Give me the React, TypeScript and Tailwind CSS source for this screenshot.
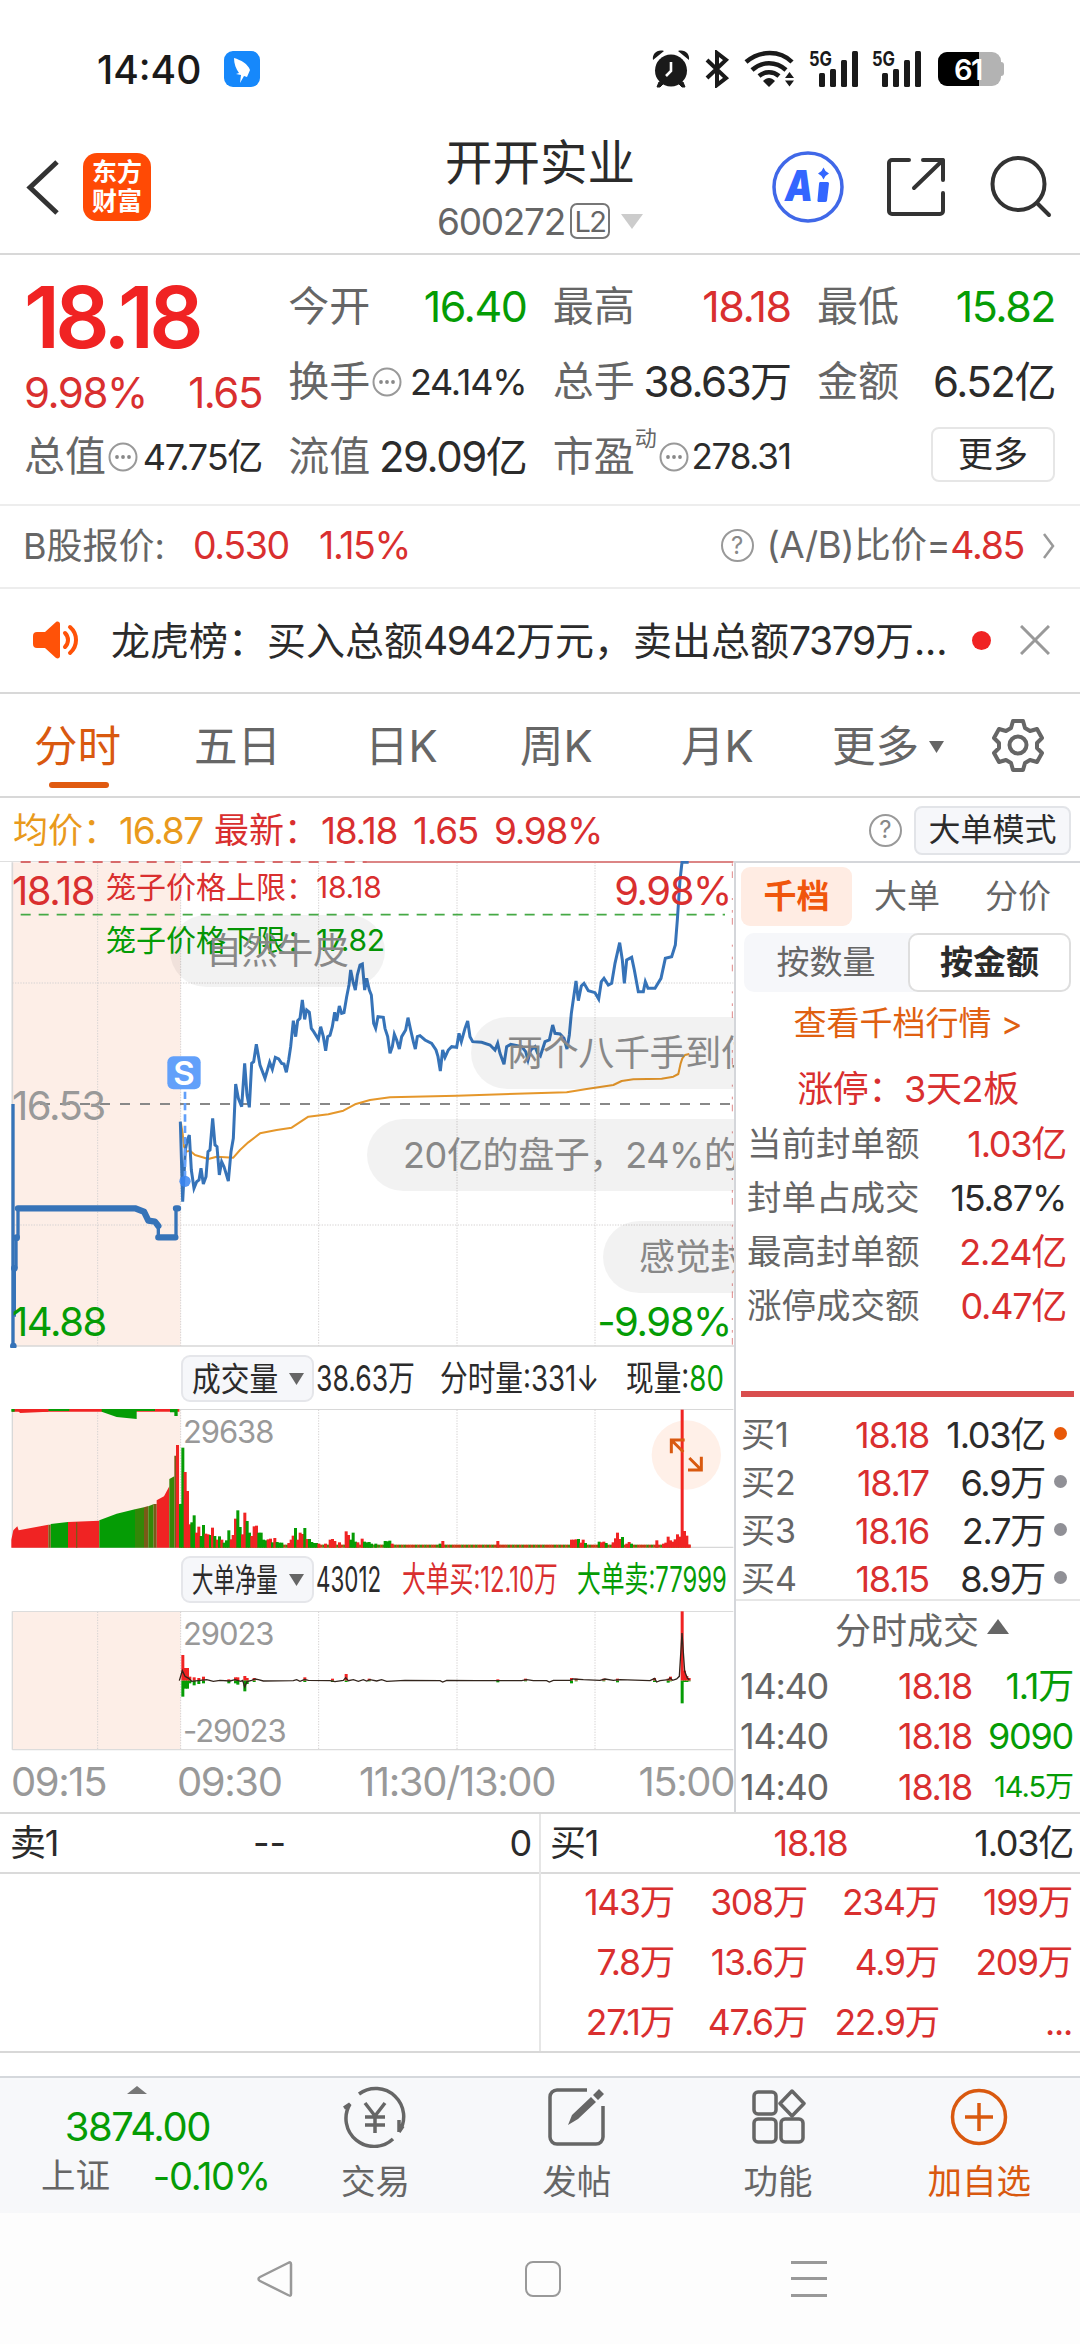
import { Fragment, type ReactNode } from 'react';

const RED = '#f02323';
const GREEN = '#059c05';

// price chart, drawn on a 3x grid
const priceLine =
  '541,815 548,1055 556,900 562,870 568,855 574,960 582,1015 590,995 597,990 603,955 610,1002 618,980 624,905 630,900 638,805 645,885 651,890 658,975 665,935 672,950 685,993 693,905 700,865 707,702 715,745 725,770 734,640 741,735 748,772 755,640 761,635 769,583 780,645 795,685 809,637 817,658 826,622 836,627 845,640 852,642 859,667 866,630 872,590 880,512 887,560 893,512 900,505 907,450 914,508 920,480 928,487 934,535 941,545 955,568 962,530 970,560 977,602 983,560 990,556 997,530 1004,487 1010,513 1018,468 1025,490 1032,488 1040,440 1047,405 1052,360 1059,395 1066,420 1072,375 1080,345 1087,342 1094,420 1100,385 1108,420 1114,435 1121,520 1127,535 1134,500 1150,502 1155,535 1163,560 1170,610 1177,590 1183,553 1190,570 1198,597 1205,560 1217,540 1224,503 1232,540 1240,575 1246,597 1252,560 1260,557 1275,570 1295,580 1308,600 1314,620 1321,663 1328,600 1335,622 1345,600 1355,590 1370,592 1377,550 1384,575 1395,535 1403,513 1410,560 1418,575 1445,577 1470,585 1485,600 1493,580 1500,610 1512,643 1520,590 1532,583 1565,590 1577,605 1584,630 1592,600 1605,590 1613,610 1621,618 1635,575 1648,570 1658,525 1665,550 1680,552 1692,565 1701,597 1708,555 1714,490 1728,393 1735,452 1744,408 1752,400 1765,422 1785,428 1796,447 1804,395 1812,385 1825,405 1835,400 1845,340 1859,278 1867,330 1873,400 1880,330 1895,322 1903,360 1915,425 1930,425 1936,395 1944,415 1965,415 1983,385 1996,325 2015,320 2026,285 2032,210 2040,90 2046,37 2066,37';
const avgLine =
  '543,820 548,850 552,890 560,905 570,902 585,915 625,927 650,920 700,923 720,900 745,877 780,850 830,840 875,833 925,800 985,793 1030,782 1065,763 1110,750 1170,742 1370,737 1700,727 1760,717 1840,705 1865,693 1900,688 1985,686 2020,680 2035,672 2042,640 2047,625 2055,615 2068,612';

// volume bars: [x, height, up?]
const bars: [number, number, number][] = [
  [541, 131, 0], [548, 300, 0], [555, 227, 1], [562, 170, 1], [569, 70, 1], [575, 76, 0], [582, 97, 0], [589, 45, 1],
  [596, 63, 1], [603, 35, 0], [610, 68, 0], [617, 42, 1], [624, 40, 1], [631, 38, 0], [637, 60, 1], [644, 35, 0],
  [651, 24, 1], [658, 34, 0], [665, 24, 1], [672, 15, 0], [679, 22, 0], [686, 52, 0], [693, 25, 1], [699, 38, 1],
  [706, 87, 1], [713, 112, 0], [720, 62, 0], [727, 40, 1], [734, 105, 1], [741, 80, 0], [748, 45, 0], [755, 35, 1],
  [762, 64, 1], [769, 66, 1], [776, 45, 0], [783, 45, 0], [790, 24, 0], [797, 22, 0], [804, 25, 1], [811, 27, 1],
  [817, 16, 0], [824, 29, 1], [831, 17, 0], [838, 15, 0], [845, 15, 0], [866, 14, 1], [873, 24, 1], [879, 36, 1],
  [886, 59, 0], [893, 24, 1], [900, 45, 1], [907, 41, 1], [914, 59, 0], [921, 26, 1], [928, 26, 0], [935, 17, 0],
  [942, 14, 0], [949, 14, 0], [956, 12, 1], [976, 12, 1], [990, 24, 1], [997, 26, 1], [1004, 20, 1], [1018, 16, 1],
  [1038, 49, 1], [1045, 38, 1], [1052, 24, 0], [1059, 45, 0], [1066, 18, 0], [1073, 16, 1], [1086, 27, 1], [1093, 18, 0],
  [1100, 16, 0], [1107, 17, 0], [1114, 12, 0], [1127, 12, 0], [1155, 20, 0], [1162, 19, 0], [1169, 21, 0], [1176, 12, 1],
  [1320, 12, 0], [1328, 20, 1], [1493, 20, 1], [1714, 24, 1], [1721, 24, 1], [1728, 25, 1], [1735, 26, 0], [1742, 15, 1],
  [1749, 24, 1], [1756, 14, 0], [1797, 18, 0], [1804, 16, 1], [1811, 18, 1], [1818, 14, 0], [1839, 16, 1], [1846, 28, 1],
  [1852, 45, 1], [1859, 26, 1], [1867, 32, 0], [1880, 12, 1], [1887, 17, 1], [1894, 12, 0], [1970, 22, 1], [1990, 12, 1],
  [1997, 15, 1], [2004, 33, 1], [2011, 22, 1], [2018, 18, 1], [2025, 25, 1], [2032, 40, 1], [2039, 33, 1], [2046, 414, 1],
  [2053, 50, 1], [2060, 36, 1], [2067, 9, 1],
];

// big-order net bars: [x, buy, sell]
const netBars: [number, number, number][] = [
  [548, 77, 48], [555, 38, 24], [562, 38, 24], [569, 12, 8], [582, 10, 14], [596, 8, 10], [610, 12, 8], [686, 4, 8],
  [706, 10, 8], [713, 10, 12], [734, 14, 32], [741, 8, 10], [762, 8, 4], [914, 10, 4], [997, 6, 4], [1038, 20, 4],
  [1107, 6, 2], [1493, 4, 5], [1576, 6, 2], [1714, 8, 8], [1728, 6, 2], [1811, 6, 2], [1852, 6, 5], [1963, 8, 4],
  [2004, 6, 6], [2011, 12, 2], [2046, 208, 68], [2053, 30, 4], [2060, 14, 4], [2067, 8, 2],
];

const comments = [
  { text: '自然牛皮', cls: 'left-[170px] top-[54px] w-[215px]' },
  { text: '两个八千手到位了', cls: 'left-[471px] top-[156px] w-[360px]' },
  { text: '20亿的盘子，24%的换手', cls: 'left-[367px] top-[258px] w-[480px]' },
  { text: '感觉封不住', cls: 'left-[603px] top-[360px] w-[260px]' },
];

const seals = [
  ['当前封单额', '1.03亿', true],
  ['封单占成交', '15.87%', false],
  ['最高封单额', '2.24亿', true],
  ['涨停成交额', '0.47亿', true],
] as const;

const bids = [
  ['买1', '18.18', '1.03亿'],
  ['买2', '18.17', '6.9万'],
  ['买3', '18.16', '2.7万'],
  ['买4', '18.15', '8.9万'],
];

const queue = ['143万', '308万', '234万', '199万', '7.8万', '13.6万', '4.9万', '209万', '27.1万', '47.6万', '22.9万', '...'];

function Num({ children, className = '' }: { children: ReactNode; className?: string }) {
  return <span className={`tracking-[-0.035em] ${className}`}>{children}</span>;
}

function Dots() {
  return (
    <svg className="ml-[2px] h-[30px] w-[30px] shrink-0" viewBox="0 0 30 30" fill="none" stroke="#999" strokeWidth="2">
      <circle cx="15" cy="15" r="13.5" />
      <g fill="#888" stroke="none">
        <circle cx="9" cy="15" r="1.9" />
        <circle cx="15" cy="15" r="1.9" />
        <circle cx="21" cy="15" r="1.9" />
      </g>
    </svg>
  );
}

function Question() {
  return (
    <span className="flex h-[33px] w-[33px] shrink-0 items-center justify-center rounded-full border-2 border-[#999] text-[24px] leading-none text-[#888]">
      ?
    </span>
  );
}

function Signal() {
  return (
    <svg className="h-[40px] w-[50px]" viewBox="0 0 50 40">
      <text x="0" y="17" fontSize="20" fontWeight="700" fill="#1a1a1a" textLength="23" lengthAdjust="spacingAndGlyphs">5G</text>
      <g fill="#1a1a1a">
        <rect x="10" y="24" width="6" height="14" rx="1.5" />
        <rect x="21" y="20" width="6" height="18" rx="1.5" />
        <rect x="32" y="11" width="6" height="27" rx="1.5" />
        <rect x="43" y="2" width="6" height="36" rx="1.5" />
      </g>
    </svg>
  );
}

function StatusBar() {
  return (
    <div className="relative flex h-[138px] items-center pr-[76px] pl-[97px]">
      <span className="w-[127px] text-[39px] font-medium text-[#1a1a1a]">14:40</span>
      <svg className="h-[36px] w-[36px]" viewBox="0 0 36 36">
        <rect width="36" height="36" rx="9" fill="#1688fb" />
        <path d="M10 7c7 2 14 6 16 12l-3 7-3-1-4 7 1-8-5-1 3-1c-3-4-5-9-5-15z" fill="#fff" />
      </svg>
      <div className="ml-auto flex items-center">
        <svg className="mr-[14px] h-[40px] w-[38px]" viewBox="0 0 38 40">
          <path d="m7 33-2 5h3l4-4zM31 33l2 5h-3l-4-4z" fill="#1a1a1a" stroke="#1a1a1a" />
          <path d="M1 11C0 5 5 0 12 2zM37 11C38 5 33 0 26 2z" fill="#1a1a1a" />
          <circle cx="19" cy="21.500" r="16" fill="#1a1a1a" />
          <path d="M19 13v9l-5 5" fill="none" stroke="#fff" strokeWidth="2.600" />
        </svg>
        <svg className="mr-[14px] h-[38px] w-[26px]" viewBox="0 0 26 38" fill="none" stroke="#1a1a1a" strokeWidth="4">
          <path d="M3 10 22 28 13 35V3l9 7L3 28" />
        </svg>
        <svg className="mr-[13px] h-[40px] w-[52px]" viewBox="0 0 52 40" fill="none" stroke="#1a1a1a" strokeWidth="4.500">
          <path d="M2 13c14-12 34-12 46 0M8 21c10-9 24-9 34 0M15 27c6-5 14-5 20 0" />
          <path d="m25 38-6-6c4-4 8-4 12 0zM41 29l4.500-6 4.500 6zM41 31.500l4.500 6 4.500-6z" fill="#1a1a1a" stroke="none" />
        </svg>
        <Signal />
        <span className="w-[13px]" />
        <Signal />
        <div className="relative ml-[16px] flex h-[34px] w-[66px] items-center">
          <div className="flex h-[34px] w-[63px] overflow-hidden rounded-[9px] bg-[#b3b3b3]">
            <div className="w-[41px] bg-black" />
          </div>
          <div className="h-[14px] w-[3px] rounded-r-[3px] bg-[#b3b3b3]" />
          <span className="absolute top-[1px] left-[16px] text-[29px] leading-[34px] font-semibold tracking-[-0.05em] text-white">61</span>
        </div>
      </div>
    </div>
  );
}

function Header() {
  return (
    <div className="relative flex h-[117px] items-start border-b-2 border-[#d8d8d8]">
      <svg className="mt-[21px] ml-[25px] h-[57px] w-[36px]" viewBox="0 0 36 57" fill="none" stroke="#333" strokeWidth="5">
        <path d="M32 3 5 28.500 32 54" />
      </svg>
      <div className="mt-[15px] ml-[22px] flex h-[68px] w-[68px] flex-col items-center justify-center rounded-[14px] bg-[#ff4a05] text-[25px] leading-[29px] font-bold text-white">
        <span>东方</span>
        <span>财富</span>
      </div>
      <div className="absolute inset-x-0 top-0 flex flex-col items-center">
        <h1 className="text-[47.5px] leading-[50px] text-[#2b2b2b]">开开实业</h1>
        <div className="flex h-[66px] items-center text-[#666]">
          <Num className="text-[37px]">600272</Num>
          <span className="ml-[5px] flex h-[36px] w-[40px] items-center justify-center rounded-[7px] border-2 border-[#777] text-[29px] tracking-[-0.05em]">L2</span>
          <svg className="ml-[11px] h-[15px] w-[22px]" viewBox="0 0 22 15">
            <path d="M0 0h22L11 15z" fill="#ccc" />
          </svg>
        </div>
      </div>
      <div className="mt-[13px] ml-auto flex items-center pr-[28px]">
        <svg className="h-[72px] w-[72px]" viewBox="0 0 72 72">
          <circle cx="36" cy="36" r="34" fill="none" stroke="#4068e8" strokeWidth="3.500" />
          <text x="13" y="49.500" fontSize="42" fontWeight="900" fontStyle="italic" fill="#3366ff" textLength="28" lengthAdjust="spacingAndGlyphs">A</text>
          <path d="M48 31h7.500a1.500 1.500 0 0 1 1.500 1.500l-2 17a2 2 0 0 1-2 1.500h-6a1.500 1.500 0 0 1-1.500-2l1.500-16a2 2 0 0 1 1-2zM51.500 16.500l2 3.500 3.500 2.500-3.500 2.500-2 3.500-2-3.500-3.500-2.500 3.500-2.500z" fill="#3366ff" />
        </svg>
        <svg className="ml-[42px] h-[64px] w-[62px]" viewBox="0 0 62 64" fill="none" stroke="#333" strokeWidth="4" strokeLinecap="round" strokeLinejoin="round">
          <path d="M23 5H6a3 3 0 0 0-3 3v48a3 3 0 0 0 3 3h48a3 3 0 0 0 3-3V38M37 5h20v20M57 5 28 33" />
        </svg>
        <svg className="ml-[42px] h-[64px] w-[62px]" viewBox="0 0 62 64" fill="none" stroke="#333" strokeWidth="4" strokeLinecap="round">
          <circle cx="28.500" cy="29" r="26" />
          <path d="m47 48 12 12" />
        </svg>
      </div>
    </div>
  );
}

function Quote() {
  const row = 'flex h-[75px] items-center justify-between';
  const label = 'text-[41px] text-[#666]';
  return (
    <div className="flex h-[251px] justify-between border-b-2 border-[#ededed] pt-[14px] pr-[25px] pl-[24px]">
      <div className="flex w-[238px] flex-col">
        <div className="flex h-[96px] items-center text-[85px] font-semibold tracking-[-0.055em] text-[#f02323]">18.18</div>
        <div className="flex h-[56px] items-center justify-between text-[42px] text-[#d92f2f]">
          <Num>9.98%</Num>
          <Num>1.65</Num>
        </div>
        <div className="flex h-[71px] items-center text-[#2b2b2b]">
          <span className={label}>总值</span>
          <Dots />
          <Num className="ml-auto text-[36px]">47.75亿</Num>
        </div>
      </div>
      <div className="w-[238px]">
        <div className={row}>
          <span className={label}>今开</span>
          <Num className="text-[43px] text-[#059c05]">16.40</Num>
        </div>
        <div className={row}>
          <span className={label}>换手</span>
          <Dots />
          <Num className="ml-auto text-[36px] text-[#2b2b2b]">24.14%</Num>
        </div>
        <div className={row}>
          <span className={label}>流值</span>
          <Num className="text-[42px] text-[#2b2b2b]">29.09亿</Num>
        </div>
      </div>
      <div className="w-[238px]">
        <div className={row}>
          <span className={label}>最高</span>
          <Num className="text-[43px] text-[#d92f2f]">18.18</Num>
        </div>
        <div className={row}>
          <span className={label}>总手</span>
          <Num className="text-[42px] text-[#2b2b2b]">38.63万</Num>
        </div>
        <div className={row}>
          <span className={label}>市盈</span>
          <span className="mb-[38px] text-[22px] text-[#666]">动</span>
          <Dots />
          <Num className="ml-auto text-[35px] text-[#2b2b2b]">278.31</Num>
        </div>
      </div>
      <div className="w-[238px]">
        <div className={row}>
          <span className={label}>最低</span>
          <Num className="text-[43px] text-[#059c05]">15.82</Num>
        </div>
        <div className={row}>
          <span className={label}>金额</span>
          <Num className="text-[42px] text-[#2b2b2b]">6.52亿</Num>
        </div>
        <div className="flex h-[70px] items-center justify-end">
          <div className="flex h-[55px] w-[124px] items-center justify-center rounded-[8px] border-2 border-[#e6e6e6] text-[35px] text-[#2b2b2b]">更多</div>
        </div>
      </div>
    </div>
  );
}

function Notices() {
  return (
    <>
      <div className="flex h-[83px] items-center border-b-2 border-[#ededed] pb-[2px] pl-[23px] text-[37.5px] text-[#666]">
        <span className="text-[36px]">B股报价:</span>
        <Num className="ml-[28px] text-[#d92f2f]">0.530</Num>
        <Num className="ml-[30px] text-[#d92f2f]">1.15%</Num>
        <div className="ml-auto flex items-center pr-[24px]">
          <Question />
          <span className="ml-[13px] text-[36.5px] tracking-[-0.01em]">(A/B)比价=</span>
          <Num className="text-[#d92f2f]">4.85</Num>
          <svg className="ml-[18px] h-[26px] w-[14px]" viewBox="0 0 14 26" fill="none" stroke="#999" strokeWidth="2.500">
            <path d="m2 1 9 12-9 12" />
          </svg>
        </div>
      </div>
      <div className="flex h-[105px] items-center border-b-2 border-[#d8d8d8] pr-[30px] pb-[1px] pl-[33px]">
        <svg className="h-[38px] w-[46px]" viewBox="0 0 46 38">
          <path d="M4 11h8L23 1c2-1 4 0 4 2v32c0 2-2 3-4 2L12 27H4a4 4 0 0 1-4-4v-8a4 4 0 0 1 4-4z" fill="#ff5208" />
          <path d="M32 12c4 4 4 10 0 14M37 6c8 7 8 19 0 26" fill="none" stroke="#ff5208" strokeWidth="4" strokeLinecap="round" />
        </svg>
        <span className="ml-[32px] w-[850px] text-[39px] whitespace-nowrap text-[#2b2b2b]">
          龙虎榜：买入总额<Num>4942</Num>万元，卖出总额<Num>7379</Num>万...
        </span>
        <span className="ml-auto h-[19px] w-[19px] rounded-full bg-[#f02323]" />
        <svg className="ml-[29px] h-[30px] w-[30px]" viewBox="0 0 30 30" stroke="#999" strokeWidth="3">
          <path d="m1 1 28 28M29 1 1 29" />
        </svg>
      </div>
      <div className="flex h-[104px] items-center border-b-2 border-[#d8d8d8] pt-[3px] text-[43.500px] text-[#666]">
        <div className="relative ml-[34px] w-[160px] text-[#d9590f]">
          <span>分时</span>
          <span className="absolute top-[57px] left-[15px] h-[6px] w-[60px] rounded-full bg-[#e05a10]" />
        </div>
        <span className="w-[171px]">五日</span>
        <span className="w-[155px]">日K</span>
        <span className="w-[161px]">周K</span>
        <span className="w-[151px]">月K</span>
        <span>更多</span>
        <svg className="ml-[10px] h-[12px] w-[15px]" viewBox="0 0 15 12">
          <path d="M0 0h15L7.500 12z" fill="#666" />
        </svg>
        <svg className="mb-[4px] ml-[47px] h-[54px] w-[54px]" viewBox="0 0 54 54" fill="none" stroke="#666" strokeWidth="4" strokeLinejoin="round">
          <path d="m22 3h10l2 7 5 3 7-2 5 9-5 5v5l5 5-5 9-7-2-5 3-2 7H22l-2-7-5-3-7 2-5-9 5-5v-5l-5-5 5-9 7 2 5-3z" />
          <circle cx="27" cy="27" r="8.500" />
        </svg>
      </div>
      <div className="flex h-[63px] items-center pt-[1px] pr-[9px] pl-[13px] text-[37px]">
        <span className="w-[106px] text-[35px] text-[#e99a1c]">均价：</span>
        <Num className="w-[95px] text-[#e99a1c]">16.87</Num>
        <span className="w-[107px] text-[35px] text-[#d92f2f]">最新：</span>
        <Num className="w-[92px] text-[#d92f2f]">18.18</Num>
        <Num className="w-[81px] text-[#d92f2f]">1.65</Num>
        <Num className="text-[#d92f2f]">9.98%</Num>
        <span className="ml-auto" />
        <Question />
        <div className="ml-[12px] flex h-[49px] w-[157px] items-center justify-center rounded-[8px] border-2 border-[#e2e4e8] bg-[#f6f7fa] text-[32px] text-[#2b2b2b]">大单模式</div>
      </div>
    </>
  );
}

function PriceChart() {
  return (
    <div className="relative h-[487px] overflow-hidden">
      <svg className="block h-[487px] w-[734px]" viewBox="0 33 2202 1461" fill="none">
        <rect x="37" y="37" width="505" height="1451" fill="#fdeee7" />
        <path d="M0 32H2202" stroke="#d4d4d4" strokeWidth="6" />
        <path d="M37 37V1488H2202" stroke="#d8d8d8" strokeWidth="5" />
        <path d="M293 37V1488M542 37V1488M956 37V1488M1371 37V1488M1785 37V1488M37 399H2200M37 1125H2200" stroke="#d5d2d2" strokeWidth="3" strokeDasharray="4 4" />
        <path d="M62 36H2200" stroke="#d76a6a" strokeWidth="6" strokeDasharray="30 24" />
        <path d="M1100 36H2200" stroke="#dc8585" strokeWidth="6" />
        <path d="M62 194H2175" stroke="#45a945" strokeWidth="5" strokeDasharray="30 24" />
        <path d="M120 762H2200" stroke="#888" strokeWidth="6" strokeDasharray="30 30" />
        <path d="M2197 40V1488" stroke="#e08a8a" strokeWidth="3" strokeDasharray="8 16 20 60 6 30" />
        <polyline points={avgLine} stroke="#e5972b" strokeWidth="6" strokeLinejoin="round" />
        <polyline points={priceLine} stroke="#3673b8" strokeWidth="9" />
        <path d="M39 762V1488" stroke="#3673b8" strokeWidth="10" />
        <path d="M43 1255V1400M48 1163V1255M54 1074V1163M475 1128V1162M528 1162V1075" stroke="#3673b8" strokeWidth="10" />
        <path d="M54 1075H405L432 1085L445 1112L465 1115L475 1128M475 1162H526M528 1075H534" stroke="#3673b8" strokeWidth="19" strokeLinecap="round" strokeLinejoin="round" />
        <g fill="#3673b8">
          <circle cx="40" cy="1488" r="10" />
          <circle cx="43" cy="1255" r="10" />
          <circle cx="50" cy="1163" r="10" />
        </g>
        <path d="M555 725V980" stroke="#62a0fa" strokeWidth="8" strokeDasharray="22 12" />
        <circle cx="555" cy="994" r="17" fill="#3a86f2" fillOpacity=".85" />
        <rect x="502" y="619" width="100" height="99" rx="18" fill="#62a0fa" />
      </svg>
      <span className="absolute top-[196px] left-[167px] w-[34px] text-center text-[33px] leading-[32px] font-semibold text-white">S</span>
      <Num className="absolute top-[8px] left-[12px] text-[40px] leading-[44px] text-[#d92f2f]">18.18</Num>
      <Num className="absolute top-[223px] left-[12px] text-[40px] leading-[44px] text-[#999]">16.53</Num>
      <Num className="absolute top-[439px] left-[12px] text-[40px] leading-[44px] text-[#059c05]">14.88</Num>
      <Num className="absolute top-[8px] right-[3px] text-[40px] leading-[44px] text-[#d92f2f]">9.98%</Num>
      <Num className="absolute top-[439px] right-[3px] text-[40px] leading-[44px] text-[#059c05]">-9.98%</Num>
      <div className="absolute top-[8px] left-[106px] flex items-center text-[30px] leading-[36px] text-[#d92f2f]">
        笼子价格上限：<span className="tracking-[-0.01em]">18.18</span>
      </div>
      <div className="absolute top-[61px] left-[106px] flex items-center text-[30px] leading-[36px] text-[#059c05]">
        笼子价格下限：<span className="tracking-[-0.01em]">17.82</span>
      </div>
      {comments.map((c) => (
        <div
          key={c.text}
          className={`absolute flex h-[72px] items-center rounded-full bg-black/5 pl-[36px] text-[36px] tracking-[-0.01em] whitespace-nowrap text-[#888] ${c.cls}`}
        >
          {c.text}
        </div>
      ))}
    </div>
  );
}

function Picker({ children }: { children: ReactNode }) {
  return (
    <div className="flex h-[47px] w-[133px] items-center rounded-[9px] border-2 border-[#e5e6ea] bg-[#f6f7fa] pl-[9px] text-[#2b2b2b]">
      <span className="w-[97px]">{children}</span>
      <svg className="h-[12px] w-[15px] shrink-0" viewBox="0 0 15 12">
        <path d="M0 0h15L7.500 12z" fill="#666" />
      </svg>
    </div>
  );
}

function VolumeChart() {
  const base = Array.from({ length: 221 }, (_, i) => i);
  return (
    <div className="relative">
      <div className="relative flex h-[61px] items-center pl-[181px] text-[35px] whitespace-nowrap text-[#2b2b2b]">
        <Picker>
          <span className="inline-block origin-left scale-x-[0.87] text-[33px]">成交量</span>
        </Picker>
        <div className="absolute left-[316px] origin-left scale-x-[0.76]">38.63万</div>
        <div className="absolute left-[440px] origin-left scale-x-[0.79]">分时量:331↓</div>
        <div className="absolute left-[626px] origin-left scale-x-[0.79]">
          现量:<span className="text-[#059c05]">80</span>
        </div>
      </div>
      <svg className="block h-[139px] w-[734px]" viewBox="0 178 2202 417" fill="none">
        <rect x="37" y="178" width="505" height="416" fill="#fdeee7" />
        <path d="M37 179H2200M37 179V594M37 593H2200" stroke="#d8d8d8" strokeWidth="4" />
        <path d="M293 180V594M542 180V594M956 180V594M1371 180V594M1785 180V594" stroke="#d5d2d2" strokeWidth="3" strokeDasharray="4 4" />
        <path d="M36 178H538V186H36z" fill={RED} />
        <path d="M34 178H44V186H34zM145 178H208V184H145zM305 178H410V208L350 202 305 186zM410 178H465V184H410zM510 178H533V199H523V188H510z" fill={GREEN} />
        <path d="M50 178H145V186L60 190z" fill={RED} />
        <path d="M34 594V570L40 542 52 530 56 542 145 525V594zM204 594V517L298 513V594zM470 594V452L492 440 508 410V594zM528 594V286H537V594z" fill={RED} />
        <path d="M152 594V523L204 517V594zM298 594V512L350 492 405 479V594z" fill={GREEN} />
        <path d="M145 594V525H152V523V594zM228 594V518H232V594zM432 594V473L445 469V594zM460 594V463H470V594z" fill="#7a5a18" />
        <path d="M405 594V479L432 473V594zM445 594V470L460 464V594zM508 594V388L523 380V594z" fill="#348708" />
        <path d="M523 594V318H528V594z" fill="#7a5a18" />
        {base.map((i) => (
          <rect key={i} x={537 + i * 6.94} y={585} width="8" height="9" fill={(i * 7 + (i >> 2)) % 5 < 3 ? '#c83a14' : '#3d8a08'} />
        ))}
        {bars.map(([x, h, up]) => (
          <rect key={x} x={x - 4} y={594 - h} width="9" height={h} fill={up ? RED : GREEN} />
        ))}
        <circle cx="2059" cy="316" r="104" fill="#ff5500" fillOpacity=".09" />
        <path d="M2014 311V271H2054M2014 271 2050 307M2064 361H2104V321M2104 361 2068 325" stroke="#d9590f" strokeWidth="9" />
      </svg>
      <Num className="absolute top-[66px] left-[183px] text-[31px] leading-[36px] text-[#999]">29638</Num>
    </div>
  );
}

function NetChart() {
  return (
    <div className="relative">
      <div className="relative flex h-[63px] items-center pl-[181px] text-[35px] whitespace-nowrap text-[#2b2b2b]">
        <Picker>
          <span className="inline-block origin-left scale-x-[0.65] text-[33px]">大单净量</span>
        </Picker>
        <div className="absolute left-[316px] origin-left scale-x-[0.64]">43012</div>
        <div className="absolute left-[402px] origin-left scale-x-[0.68] text-[#d92f2f]">大单买:12.10万</div>
        <div className="absolute left-[577px] origin-left scale-x-[0.68] text-[#059c05]">大单卖:77999</div>
      </div>
      <svg className="block h-[140px] w-[734px]" viewBox="0 784 2202 420" fill="none">
        <rect x="37" y="784" width="505" height="416" fill="#fdeee7" />
        <path d="M37 785H2200M37 785V1200M37 1200H2200" stroke="#dcdcdc" strokeWidth="4" />
        <path d="M293 786V1200M542 786V1200M956 786V1200M1371 786V1200M1785 786V1200" stroke="#d5d2d2" strokeWidth="3" strokeDasharray="4 4" />
        {netBars.map(([x, buy, sell]) => (
          <Fragment key={x}>
            <rect x={x - 4} y={993 - buy} width="9" height={buy} fill={RED} />
            <rect x={x - 4} y={993} width="9" height={sell} fill={GREEN} />
          </Fragment>
        ))}
        <polyline
          points="538,993 547,963 555,980 566,986 575,995 600,992 620,990 640,995 660,992 690,994 705,990 722,995 728,992 734,1012 741,996 755,992 765,988 775,990 790,994 880,993 890,990 900,995 914,989 925,992 990,993 1005,996 1030,992 1037,984 1045,993 1060,990 1075,995 1090,990 1100,994 1110,990 1130,994 1145,990 1160,995 1215,992 1320,993 1328,997 1340,992 1430,993 1565,993 1580,990 1600,993 1640,993 1648,997 1660,992 1710,992 1720,988 1750,990 1800,992 1815,988 1840,992 1860,990 1950,993 1964,986 1970,997 1980,993 2005,990 2010,985 2018,992 2030,988 2038,980 2046,850 2054,965 2062,985 2068,990"
          stroke="#33251c"
          strokeWidth="4"
        />
      </svg>
      <Num className="absolute top-[68px] left-[183px] text-[31px] leading-[36px] text-[#999]">29023</Num>
      <Num className="absolute top-[165px] left-[183px] text-[31px] leading-[36px] text-[#999]">-29023</Num>
      <div className="relative flex h-[61px] items-center text-[40px] text-[#999]">
        <Num className="ml-[11px] w-[166px]">09:15</Num>
        <Num>09:30</Num>
        <Num className="absolute left-[359px]">11:30/13:00</Num>
        <Num className="ml-auto">15:00</Num>
      </div>
    </div>
  );
}

function OrderPanel() {
  return (
    <div className="flex h-[951px] w-[346px] flex-col border-t-2 border-l-2 border-[#d4d6da] text-[36px]">
      <div className="mt-[4px] ml-[5px] flex h-[59px] items-center text-[33px] text-[#666]">
        <div className="flex h-[59px] w-[111px] items-center justify-center rounded-[9px] bg-[#ffece3] font-bold text-[#f0560c]">千档</div>
        <span className="ml-[22px]">大单</span>
        <span className="ml-[45px]">分价</span>
      </div>
      <div className="mt-[7px] ml-[8px] flex h-[60px] w-[327px] rounded-[10px] bg-[#f6f7fa] text-[33px] text-[#666]">
        <span className="flex w-[164px] items-center justify-center">按数量</span>
        <span className="flex w-[163px] items-center justify-center rounded-[10px] border-2 border-[#dedede] bg-white font-bold text-[#2b2b2b]">按金额</span>
      </div>
      <div className="flex h-[62px] items-center justify-center text-[33px] text-[#e06010]">查看千档行情 &gt;</div>
      <div className="flex h-[64px] items-center justify-center pt-[8px] text-[#d92f2f]">
        <span className="tracking-[-0.01em]">涨停：3天2板</span>
      </div>
      <div className="pr-[14px] pl-[11px]">
        {seals.map(([name, value, up]) => (
          <div key={name} className="flex h-[54px] items-center justify-between">
            <span className="text-[34.5px] text-[#666]">{name}</span>
            <Num className={up ? 'text-[#d92f2f]' : 'text-[#2b2b2b]'}>{value}</Num>
          </div>
        ))}
      </div>
      <div className="mt-[58px] ml-[5px] h-[6px] w-[333px] bg-[#d94e4e]" />
      <div className="mt-[14px] h-[190px] border-b-2 border-[#e6e6e6]">
        {bids.map(([name, price, amount], i) => (
          <div key={name} className="flex h-[48px] items-center pl-[5px]">
            <span className="w-[80px] text-[34px] text-[#666]">{name}</span>
            <Num className="w-[108px] text-right text-[#d92f2f]">{price}</Num>
            <Num className="w-[116px] text-right text-[#2b2b2b]">{amount}</Num>
            <span className={`mb-[4px] ml-[9px] h-[13px] w-[13px] rounded-full ${i === 0 ? 'bg-[#e85808]' : 'bg-[#909096]'}`} />
          </div>
        ))}
      </div>
      <div className="flex h-[60px] items-center justify-center pl-[28px] text-[#666]">
        分时成交
        <svg className="mb-[8px] ml-[8px] h-[15px] w-[22px]" viewBox="0 0 22 15">
          <path d="M11 0 22 15H0z" fill="#666" />
        </svg>
      </div>
      {['1.1万', '9090', '14.5万'].map((amount, i) => (
        <div key={amount} className="flex h-[51px] items-center pr-[7px] pl-[4px]">
          <Num className="w-[120px] text-[#666]">14:40</Num>
          <Num className="w-[112px] text-right text-[#d92f2f]">18.18</Num>
          <Num className={`ml-auto text-[#059c05] ${i === 2 ? 'text-[29px]' : ''}`}>{amount}</Num>
        </div>
      ))}
    </div>
  );
}

function Depth() {
  return (
    <div className="flex h-[241px] border-y-2 border-[#d8d8d8] text-[36px] text-[#2b2b2b]">
      <div className="w-[541px] border-r-2 border-[#e6e6e6]">
        <div className="relative flex h-[60px] items-center justify-between border-b-2 border-[#dadada] pr-[8px] pl-[10px]">
          <Num>卖1</Num>
          <span className="absolute inset-x-0 text-center">--</span>
          <Num>0</Num>
        </div>
      </div>
      <div className="flex-1">
        <div className="relative flex h-[60px] items-center justify-between border-b-2 border-[#dadada] pr-[7px] pl-[9px]">
          <Num>买1</Num>
          <Num className="absolute inset-x-0 text-center text-[#d92f2f]">18.18</Num>
          <Num>1.03亿</Num>
        </div>
        <div className="-mt-[1px] grid grid-cols-[133px_133px_132px_133px] text-right text-[35.5px] leading-[60px] text-[#d92f2f]">
          {queue.map((q) => (
            <Num key={q}>{q}</Num>
          ))}
        </div>
      </div>
    </div>
  );
}

function TabBar() {
  const item = 'flex w-[201.5px] flex-col items-center pt-[8px]';
  const caption = 'mt-[9px] leading-[50px]';
  return (
    <div className="mt-[23px] flex h-[137px] border-t-2 border-[#d5d8dc] bg-[#f7f8fa] text-[34.5px] text-[#666]">
      <div className="flex w-[275px] flex-col items-center">
        <svg className="mt-[8px] h-[8px] w-[20px]" viewBox="0 0 20 8">
          <path d="M10 0 20 8H0z" fill="#777" />
        </svg>
        <Num className="mt-[10px] text-[40px] leading-[46px] text-[#059c05]">3874.00</Num>
        <div className="flex w-full items-center justify-between pr-[5px] pl-[41px] leading-[52px]">
          <span>上证</span>
          <Num className="text-[38px] text-[#059c05]">-0.10%</Num>
        </div>
      </div>
      <div className={item}>
        <svg className="h-[62px] w-[66px]" viewBox="0 0 66 62" fill="none" stroke="#666" strokeWidth="3.500">
          <path d="M17 8a28 28 0 0 1 40 38l4-6M51 53A28 28 0 0 1 8 18l-6 4M57 46V34" />
          <path d="m23 17 10 13 10-13M33 30v17M23 31h20M23 39h20" />
        </svg>
        <span className={caption}>交易</span>
      </div>
      <div className={item}>
        <svg className="h-[62px] w-[60px]" viewBox="0 0 60 62" fill="none" stroke="#666" strokeWidth="3.500">
          <path d="M40 4H10a7 7 0 0 0-7 7v40a7 7 0 0 0 7 7h39a7 7 0 0 0 7-7V20" />
          <path d="M21 39 25 29 44 11l5 5-18 17zM46 9l6-6 5 5-6 6z" fill="#666" stroke="none" />
        </svg>
        <span className={caption}>发帖</span>
      </div>
      <div className={item}>
        <svg className="h-[62px] w-[56px]" viewBox="0 0 56 62" fill="none" stroke="#666" strokeWidth="3.500">
          <rect x="4" y="6" width="22" height="22" rx="4" />
          <rect x="4" y="33" width="22" height="23" rx="4" />
          <rect x="31" y="33" width="22" height="23" rx="4" />
          <path d="m42 5 12 12.500L42 30 30 17.500z" strokeLinejoin="round" />
        </svg>
        <span className={caption}>功能</span>
      </div>
      <div className={`${item} text-[#d9590f]`}>
        <svg className="h-[62px] w-[62px]" viewBox="0 0 62 62" fill="none" stroke="#d9590f" strokeWidth="3.500">
          <circle cx="31" cy="31" r="26.500" />
          <path d="M17 31h28M31 17v28" />
        </svg>
        <span className={caption}>加自选</span>
      </div>
    </div>
  );
}

export default function App() {
  return (
    <div className="flex h-[2344px] w-[1080px] flex-col overflow-hidden bg-white font-['Inter','Noto_Sans_CJK_SC',sans-serif] leading-none">
      <StatusBar />
      <Header />
      <Quote />
      <Notices />
      <div className="flex">
        <div className="w-[734px]">
          <PriceChart />
          <VolumeChart />
          <NetChart />
        </div>
        <OrderPanel />
      </div>
      <Depth />
      <TabBar />
      {/* system navigation */}
      <div className="flex flex-1 items-center justify-between bg-[#fdfdfd] pr-[253px] pl-[256px]">
        <svg className="h-[38px] w-[38px]" viewBox="0 0 38 38" fill="none" stroke="#999" strokeWidth="2.500" strokeLinejoin="round">
          <path d="M35 4v30c0 2-1 2-3 1L4 21c-2-1-2-3 0-4L32 3c2-1 3-1 3 1z" />
        </svg>
        <div className="h-[36px] w-[36px] rounded-[8px] border-[2.5px] border-[#999]" />
        <div className="flex h-[36px] w-[36px] flex-col justify-between">
          <span className="h-[3px] bg-[#999]" />
          <span className="h-[3px] bg-[#999]" />
          <span className="h-[3px] bg-[#999]" />
        </div>
      </div>
    </div>
  );
}
